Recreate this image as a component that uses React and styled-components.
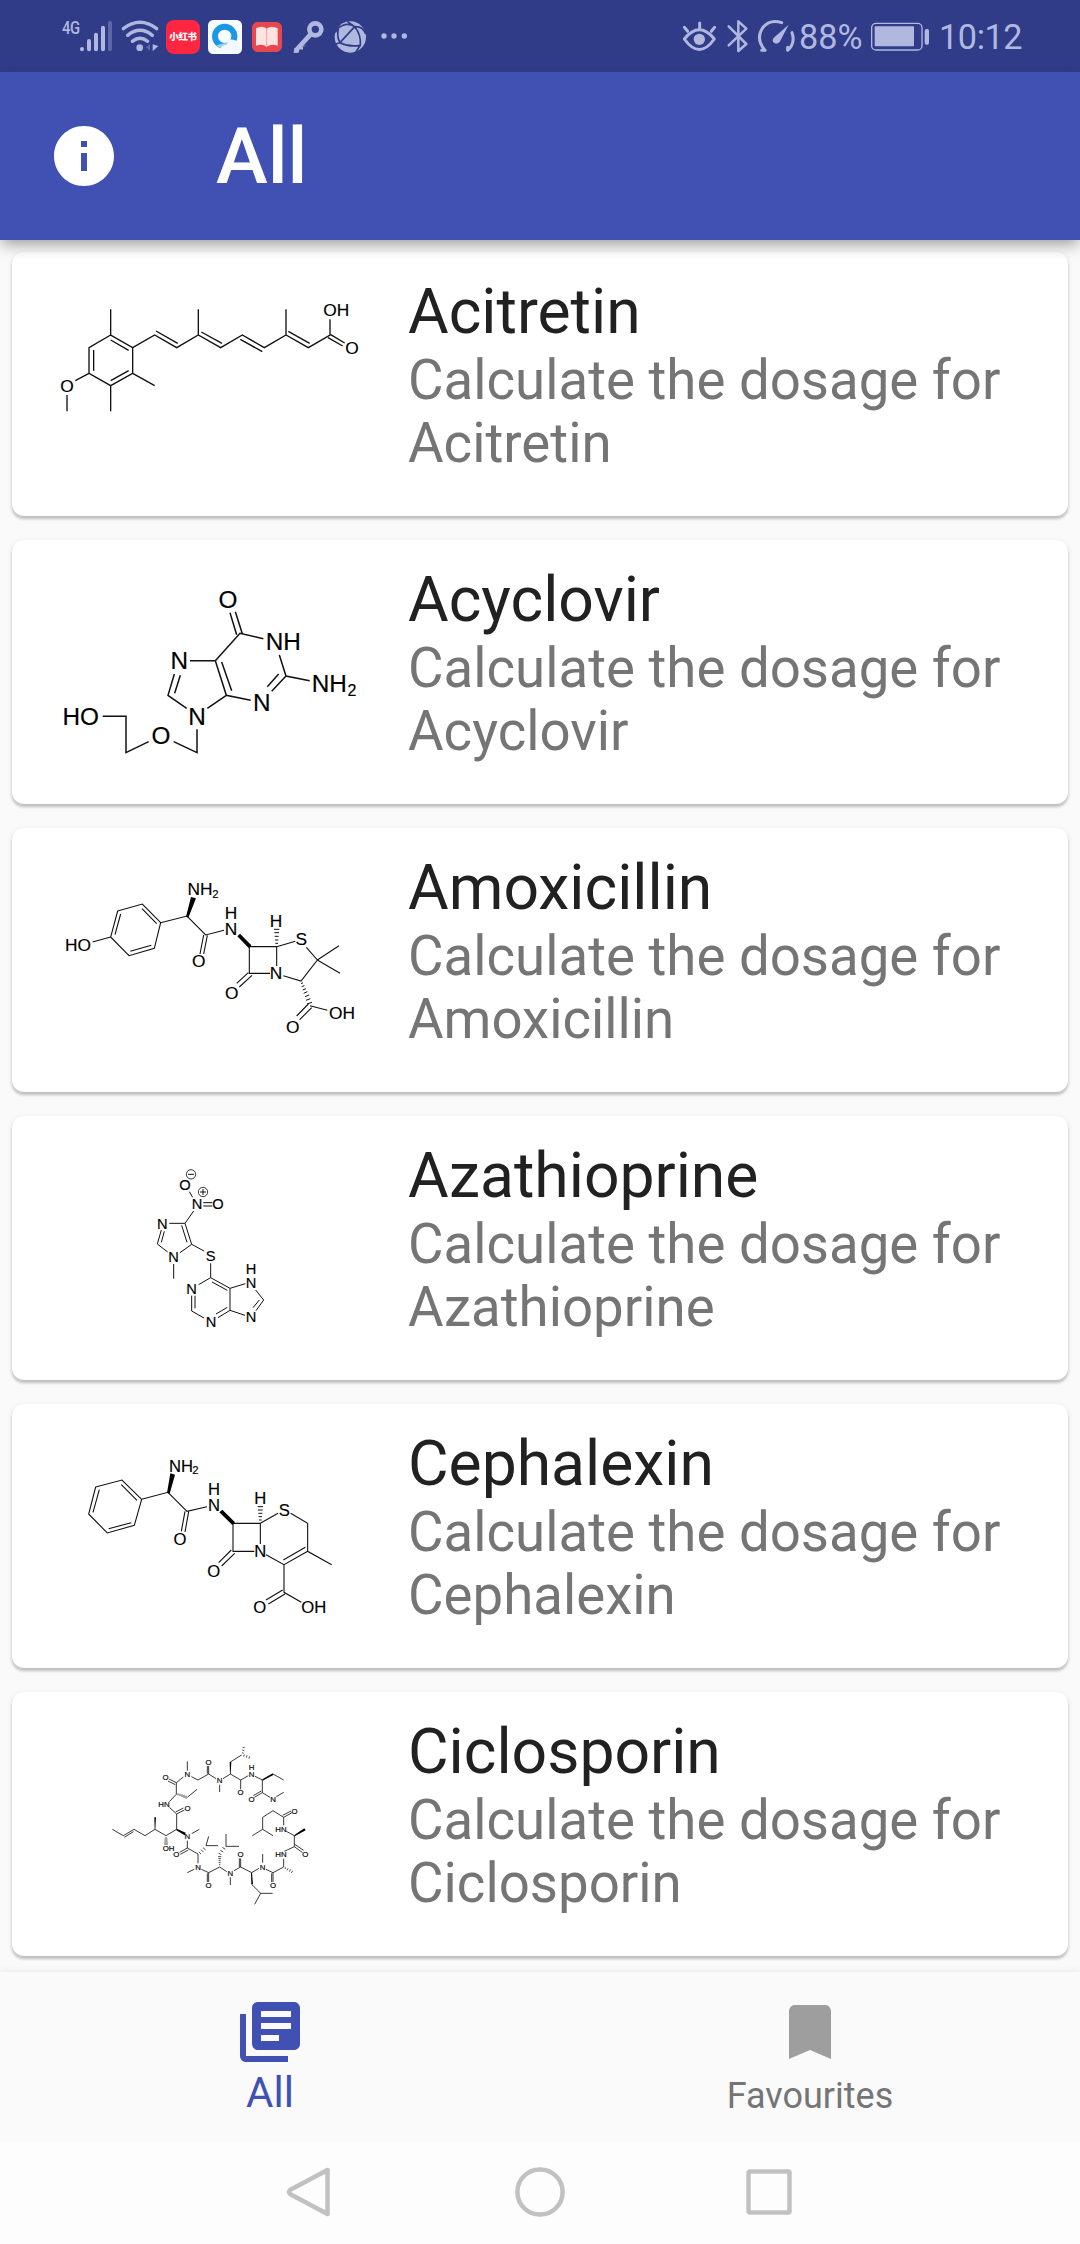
import React from "react";
import styled, { createGlobalStyle } from "styled-components";

const Global = createGlobalStyle`
  * { box-sizing: border-box; }
  body { margin: 0; background: #fafafa; font-family: Roboto, "Noto Sans CJK SC", sans-serif; }
`;

const Screen = styled.div`
  width: 1080px;
  height: 2244px;
  display: flex;
  flex-direction: column;
  overflow: hidden;
  background: #fafafa;
`;

/* ---------- status bar ---------- */

const tint = "#b1b8e0";

const StatusBar = styled.div`
  height: 72px;
  flex: none;
  display: flex;
  justify-content: space-between;
  padding: 19px 58px 0 62px;
  background: #303c88;
  color: ${tint};
`;

const StatusGroup = styled.div`
  display: flex;
  align-items: flex-start;
`;

const Glyph = styled.svg`
  display: block;
  flex: none;
  height: 35px;
  width: ${(p) => p.$w}px;
  margin-left: ${(p) => p.$ml || 0}px;
  fill: none;
  stroke-linecap: round;
  stroke-linejoin: round;
  overflow: visible;
`;

const NetworkType = styled.span`
  width: 18px;
  margin-top: -1px;
  font-size: 18.5px;
  font-weight: 500;
  line-height: 20px;
  letter-spacing: -0.5px;
  transform: scaleX(0.8);
  transform-origin: left;
`;

const RedBadge = styled.div`
  width: 34px;
  height: 34px;
  margin: 1px 0 0 7px;
  border-radius: 8px;
  background: #fe2641;
  color: #fff;
  display: flex;
  align-items: center;
  justify-content: center;
  font: 900 9.5px/1 "Noto Sans CJK SC", sans-serif;
  letter-spacing: -0.4px;
  white-space: nowrap;
`;

const StatusText = styled.span`
  font-size: 34.2px;
  line-height: 36px;
  letter-spacing: ${(p) => p.$ls || 0}px;
  margin-left: ${(p) => p.$ml}px;
  width: ${(p) => p.$w}px;
  white-space: nowrap;
`;

function Status() {
  return (
    <StatusBar>
      <StatusGroup>
        <NetworkType>4G</NetworkType>
        <Glyph $w={33} viewBox="120 57 99 105">
          <path d="M126 147V148M147 123V148M168 104V148M189 83V148" stroke={tint} strokeWidth="12" />
          <path d="M210 68V148" stroke="#5c66a8" strokeWidth="12" />
        </Glyph>
        <Glyph $w={38} $ml={8} viewBox="243 57 114 105">
          <path d="M250 86Q300 48 350 86M263 106Q300 76 337 106M277 124Q300 106 323 124" stroke={tint} strokeWidth="10" />
          <circle cx="299" cy="143" r="10" fill={tint} />
          <path d="M330 133V152L318 142Z" fill="#5c66a8" />
          <path d="M338 133V154L355 138Z" fill={tint} />
        </Glyph>
        <RedBadge>小红书</RedBadge>
        <Glyph $w={34} $ml={8} viewBox="504 57 102 105">
          <rect x="504" y="60" width="102" height="102" rx="16" fill="#f8fbfd" />
          <circle cx="554" cy="109" r="29" stroke="#1b97e8" strokeWidth="18" />
          <path d="M529 136Q550 156 585 140L590 120Z" fill="#8fd4f6" />
          <path d="M540 152Q542 134 560 134Q565 116 580 119Q592 121 591 132Q604 136 597 150Q570 154 540 152Z" fill="#f2f8fc" />
        </Glyph>
        <Glyph $w={30} $ml={10} viewBox="636 57 90 105">
          <rect x="636" y="66" width="90" height="90" rx="17" fill="#e84750" />
          <path d="M648 85Q668 75 680 86Q694 75 713 85V137Q694 131 680 140Q668 131 648 137Z" fill="#ffe3e1" />
          <path d="M680 87V138" stroke="#f0a0a0" strokeWidth="3" />
        </Glyph>
        <Glyph $w={32} $ml={11} viewBox="760 57 96 105">
          <circle cx="827" cy="88" r="18" stroke={tint} strokeWidth="14" />
          <path d="M812 104L770 150" stroke={tint} strokeWidth="14" />
          <path d="M764 145L762 159L777 158L779 147L790 149L790 137L802 137Z" fill={tint} />
        </Glyph>
        <Glyph $w={33} $ml={9} viewBox="884 57 99 105">
          <circle cx="933" cy="111" r="47" fill={tint} />
          <path
            d="M889 96Q895 82 908 77Q928 68 946 80M946 80L902 128M902 128Q892 112 897 86M902 128Q930 142 963 136M963 136Q966 104 946 80M946 80L926 66M963 136L950 155M902 128L890 132M946 80Q970 78 978 100"
            stroke="#303c88"
            strokeWidth="5"
          />
        </Glyph>
        <Glyph $w={28} $ml={13} viewBox="1021 57 84 105">
          <circle cx="1033" cy="108" r="8" fill={tint} />
          <circle cx="1063" cy="108" r="8" fill={tint} />
          <circle cx="1094" cy="108" r="8" fill={tint} />
        </Glyph>
      </StatusGroup>
      <StatusGroup>
        <Glyph $w={35} viewBox="69 57 105 105">
          <path d="M76 117Q121 62 166 117Q121 180 76 117Z" stroke={tint} strokeWidth="9" />
          <circle cx="121" cy="118" r="17" fill={tint} />
          <path d="M122 69V84M76 82L86 94M167 82L157 94" stroke={tint} strokeWidth="9" />
        </Glyph>
        <Glyph $w={22} $ml={9} viewBox="201 57 66 105">
          <path d="M209 79L262 132L238 153V64L262 86L209 136" stroke={tint} strokeWidth="7.5" />
        </Glyph>
        <Glyph $w={38} $ml={9} viewBox="294 57 114 105">
          <path d="M368 68Q334 56 312 82Q288 116 318 151M318 151L308 151M386 151Q410 130 399 98M386 151V142" stroke={tint} strokeWidth="9" />
          <path d="M389 74L362 126Q352 136 343 127Q338 119 346 112Z" fill={tint} />
        </Glyph>
        <StatusText $ml={4} $w={71}>88%</StatusText>
        <Glyph $w={60} viewBox="630 57 180 105">
          <rect x="635" y="70" width="151" height="80" rx="13" stroke={tint} strokeWidth="4" />
          <rect x="644" y="79" width="118" height="60" rx="3" fill={tint} />
          <rect x="794" y="87" width="13" height="47" rx="5" fill={tint} />
        </Glyph>
        <StatusText $ml={9} $w={83} $ls={-0.4}>10:12</StatusText>
      </StatusGroup>
    </StatusBar>
  );
}

/* ---------- app bar ---------- */

const AppBar = styled.header`
  position: relative;
  z-index: 1;
  height: 168px;
  flex: none;
  display: flex;
  align-items: center;
  padding-left: 48px;
  background: #4051b3;
  color: #fff;
  box-shadow: 0 6px 12px -3px rgba(0, 0, 0, 0.28), 0 8px 15px rgba(0, 0, 0, 0.12);
`;

const MaterialIcon = styled.svg`
  display: block;
  width: 72px;
  height: 72px;
  fill: currentColor;
`;

const BarTitle = styled.h1`
  margin: 2px 0 0 96px;
  font-size: 78px;
  font-weight: 500;
  line-height: 92px;
`;

/* ---------- cards ---------- */

const List = styled.main`
  flex: 1;
  min-height: 0;
  display: flex;
  flex-direction: column;
  gap: 24px;
  padding: 12px 12px 0;
`;

const Card = styled.article`
  height: 264px;
  flex: none;
  display: flex;
  border-radius: 12px;
  background: #fff;
  box-shadow: 0 3px 3px rgba(0, 0, 0, 0.2), 0 1px 5px rgba(0, 0, 0, 0.09);
`;

const Structure = styled.svg`
  display: block;
  flex: none;
  width: 396px;
  height: 264px;
  font-family: "Liberation Sans", Arial, sans-serif;
`;

const CardText = styled.div`
  flex: 1;
  padding: 23px 24px 0 0;
`;

const Name = styled.h2`
  margin: 0;
  font-size: 62.4px;
  line-height: 73px;
  font-weight: 400;
  color: #212121;
`;

const Description = styled.p`
  margin: 1px 0 0;
  font-size: 54.6px;
  line-height: 63px;
  color: #757575;
`;

/* Each drawing uses three units per pixel; labels are [x, y, text, size]. */
const drugs = [
  {
    name: "Acitretin",
    origin: [-84, -84],
    size: 52,
    stroke: 4,
    bonds:
      "M212 88V165L278 203V280L212 317L147 280V203L212 165M161 210V272M212 180L266 211M212 302L266 272M278 203L344 165L410 203L475 165L542 203L607 165L673 203L738 165L805 203L870 165V118M348 153L413 190M484 156L546 190M601 178L667 215M745 154L809 190M872 164L914 189M864 173L908 198M475 165V88M738 165V88M147 280L106 302M81 345V394M212 317V394M278 280L344 317",
    labels: [[81, 317, "O"], [889, 89, "OH"], [936, 203, "O"]],
  },
  {
    name: "Acyclovir",
    origin: [-84, -90],
    size: 73,
    stroke: 4.5,
    bonds:
      "M590 194L570 128M607 191L586 125M670 206L600 190L526 272H450M526 272L559 376L632 391M545 276L575 362M559 376L502 415M440 415L384 376L403 312M404 370L421 316M718 255L738 318L809 332M738 318L695 364M716 312L682 350M471 478V548L401 515M326 515L258 548V439H188",
    labels: [[564, 88, "O"], [730, 213, "NH"], [418, 271, "N"], [665, 398, "N"], [471, 440, "N"], [868, 340, "NH"], [936, 362, "2", 48], [122, 440, "HO"], [363, 495, "O"]],
  },
  {
    name: "Amoxicillin",
    origin: [-84, -96],
    size: 52,
    stroke: 3.3,
    bonds:
      "M233 153L307 132L362 188L343 265L267 287L212 231ZM242 162L225 224M306 146L350 191M334 256L271 274M212 231L158 246M362 188L441 168L497 225L552 211M491 225L480 282M502 226L491 282M628 260H710V318M628 260V340H690M625 338L590 370M636 346L598 381M710 260L766 244M799 262L832 300L783 363L730 347M832 300L897 257M832 300L900 340M810 437L862 451M805 432L770 468M815 443L779 479",
    wedges: "M438 170L453 111L468 115L445 173ZM626 264L592 229L600 221L634 256Z",
    hashes: "M702 208H718M703 218H717M704 229H716M705 240H715M706 250H714M783 371L789 368M785 380L793 377M788 390L798 386M791 400L802 395M795 410L807 405M798 421L811 416M801 432L816 427",
    labels: [[480, 88, "NH"], [526, 103, "2", 34], [114, 254, "HO"], [476, 303, "O"], [573, 208, "N"], [573, 160, "H"], [708, 182, "H"], [784, 238, "S"], [708, 340, "N"], [575, 398, "O"], [906, 458, "OH"], [758, 500, "O"]],
  },
  {
    name: "Azathioprine",
    origin: [-354, -102],
    size: 44,
    stroke: 3,
    bonds:
      "M178 125L188 142M220 158H247M220 168H247M191 183L165 220H118M165 220L185 283L150 308M155 226L171 277M94 240L82 282L113 306M103 244L94 277M131 342V386M185 283L222 303M242 340V383L206 404M185 437V483L222 504M195 437V475M264 503L300 481M258 492L292 472M246 396L292 421M242 383L300 415V481M300 415L346 401M377 420L401 450L378 482M388 450L369 473M345 496L300 481M174 73H192M210 126H228M219 117V135",
    circles: [[183, 73, 14], [219, 126, 14]],
    labels: [[165, 106, "O"], [201, 163, "N"], [264, 163, "O"], [97, 221, "N"], [131, 322, "N"], [242, 318, "S"], [185, 417, "N"], [243, 515, "N"], [363, 398, "N"], [363, 357, "H"], [363, 502, "N"]],
  },
  {
    name: "Cephalexin",
    origin: [-174, -108],
    size: 50,
    stroke: 3.3,
    bonds:
      "M77 141L156 120L215 178L193 256L112 279L56 222ZM88 149L69 217M154 134L201 181M184 248L116 266M215 178L294 157L351 214L411 200M345 214L334 274M356 215L345 276M489 250H571V312M489 250V334H553M484 330L446 368M494 340L455 378M571 250L624 220M662 220L713 250V334L785 374M713 334L642 374L588 344M706 322L640 360M642 374V457L694 487M638 450L588 480M645 462L595 492",
    wedges: "M291 159L301 100L315 104L299 161ZM487 255L448 217L457 209L495 247Z",
    hashes: "M563 200H579M564 210H578M565 220H577M566 230H576M567 240H575",
    labels: [[333, 77, "NH"], [376, 91, "2", 34], [330, 297, "O"], [432, 196, "N"], [432, 148, "H"], [571, 175, "H"], [643, 210, "S"], [571, 334, "N"], [431, 393, "O"], [731, 500, "OH"], [569, 500, "O"]],
  },
  {
    name: "Ciclosporin",
    origin: [-264, -114],
    size: 23.5,
    stroke: 2.5,
    bonds:
      "M262 94V122M250 141L229 158V193L208 215M229 158L207 147M226 164L204 153M208 232L230 252V298L198 317L165 298L135 317L102 298L70 317L37 298M100 305L73 322M230 252L253 240M227 246L250 234M262 202L291 178M275 311L298 298M262 332V354L239 367M265 360L241 373M262 354L294 372V400M318 347H354M318 347L326 319M282 418L262 428M304 418L326 428V456M322 430V456M326 428L359 411L380 425M378 349H417M378 349V312M391 442V465M402 422L422 411V385M418 411V385M422 411L455 428L477 415M455 463L482 490H518M482 490L464 523M488 372V398M498 418L519 428V456M515 430V456M519 428L551 411V386M553 364L583 350L608 368M584 343L611 361M583 350V317L559 304M551 286V262L576 248M548 256L573 243M551 262L519 242L488 262V298L519 317M488 298L457 317M274 140L294 150L326 132V108M322 131V108M326 132L348 146M359 164V186M369 146L391 132L422 150L445 137M391 96L425 75M422 150V178M465 139L487 150V188L463 202M519 132L551 150M484 183L460 197M487 188L510 202M529 200L551 187",
    wedges: "M230 296L257 308L254 316L229 301ZM163 262H168L166 298H164ZM389 96H394L392 132H390ZM487 148L518 130L520 135L488 152ZM453 428H456L459 463H454ZM583 315L613 295L617 301L584 319Z",
    hashes: "M194 324H202M193 330H203M193 336H203M192 342H204M234 190V196M240 191V198M246 193V201M252 195V204M258 197V206M297 366L303 372M303 359L310 366M309 353L317 360M357 404H361M356 398H362M356 392H362M355 386H363M354 380H364M364 374L356 370M370 366L361 361M376 358L367 352M426 68L431 70M427 60L433 62M428 52L434 53M433 74L431 80M441 76L439 83M449 79L447 86M557 412L555 417M564 415L561 421M571 418L568 425M578 422L574 429",
    labels: [[197, 143, "O"], [262, 133, "N"], [326, 96, "O"], [359, 152, "N"], [422, 188, "O"], [455, 132, "N"], [455, 112, "H"], [455, 208, "O"], [519, 208, "N"], [192, 224, "HN"], [263, 236, "O"], [206, 356, "OH"], [262, 320, "N"], [229, 374, "O"], [294, 411, "N"], [326, 467, "O"], [391, 430, "N"], [422, 374, "O"], [488, 411, "N"], [519, 467, "O"], [543, 374, "HN"], [616, 374, "O"], [543, 298, "HN"], [584, 243, "O"]],
  },
];

function DrugCard({ drug }) {
  const { name, origin, size, stroke, bonds, wedges, hashes, circles = [], labels } = drug;
  return (
    <Card>
      <Structure viewBox={`${origin[0]} ${origin[1]} 1188 792`}>
        <path d={bonds} fill="none" stroke="#111" strokeWidth={stroke} />
        {hashes && <path d={hashes} fill="none" stroke="#111" strokeWidth={stroke * 0.9} />}
        {wedges && <path d={wedges} fill="#000" />}
        {circles.map(([x, y, r]) => (
          <circle key={x} cx={x} cy={y} r={r} fill="none" stroke="#111" strokeWidth="2.5" />
        ))}
        {labels.map(([x, y, text, s = size]) => (
          <text key={`${x}-${y}`} x={x} y={y + s * 0.35} fontSize={s} textAnchor="middle" fill="#000" stroke="#000" strokeWidth="0.5">
            {text}
          </text>
        ))}
      </Structure>
      <CardText>
        <Name>{name}</Name>
        <Description>Calculate the dosage for {name}</Description>
      </CardText>
    </Card>
  );
}

/* ---------- bottom navigation ---------- */

const Tabs = styled.nav`
  position: relative;
  height: 168px;
  flex: none;
  display: flex;
  background: #fafafa;
  box-shadow: 0 -2px 5px rgba(0, 0, 0, 0.05);
`;

const Tab = styled.div`
  flex: 1;
  display: flex;
  flex-direction: column;
  align-items: center;
  padding-top: 24px;
  color: ${(p) => (p.$active ? "#4051b3" : "#9e9e9e")};
`;

const TabLabel = styled.span`
  margin-top: ${(p) => (p.$active ? 0 : 7)}px;
  font-size: ${(p) => (p.$active ? 42 : 36)}px;
  line-height: ${(p) => (p.$active ? 49 : 42)}px;
  color: ${(p) => (p.$active ? "#4051b3" : "#757575")};
`;

const SystemNav = styled.footer`
  height: 104px;
  flex: none;
  display: flex;
  align-items: center;
  padding: 0 286px 0 285px;
  justify-content: space-between;
  background: #fdfdfd;
`;

const NavGlyph = styled.svg`
  display: block;
  width: ${(p) => p.$w}px;
  height: 52px;
  fill: none;
  stroke: #c1c1c1;
  stroke-width: 4.5;
  stroke-linejoin: round;
`;

export default function App() {
  return (
    <Screen>
      <Global />
      <Status />
      <AppBar>
        <MaterialIcon viewBox="0 0 24 24">
          <path d="M12 2C6.48 2 2 6.48 2 12s4.48 10 10 10 10-4.48 10-10S17.52 2 12 2zm1 15h-2v-6h2v6zm0-8h-2V7h2v2z" />
        </MaterialIcon>
        <BarTitle>All</BarTitle>
      </AppBar>
      <List>
        {drugs.map((d) => (
          <DrugCard key={d.name} drug={d} />
        ))}
      </List>
      <Tabs>
        <Tab $active>
          <MaterialIcon viewBox="0 0 24 24">
            <path d="M4 6H2v14c0 1.1.9 2 2 2h14v-2H4V6zm16-4H8c-1.1 0-2 .9-2 2v12c0 1.1.9 2 2 2h12c1.1 0 2-.9 2-2V4c0-1.1-.9-2-2-2zm-1 9H9V9h10v2zm-4 4H9v-2h6v2zm4-8H9V5h10v2z" />
          </MaterialIcon>
          <TabLabel $active>All</TabLabel>
        </Tab>
        <Tab>
          <MaterialIcon viewBox="0 0 24 24">
            <path d="M17 3H7c-1.1 0-1.99.9-1.99 2L5 21l7-3 7 3V5c0-1.1-.9-2-2-2z" />
          </MaterialIcon>
          <TabLabel>Favourites</TabLabel>
        </Tab>
      </Tabs>
      <SystemNav>
        <NavGlyph $w={46} viewBox="0 0 46 52">
          <path d="M42.5 4V48L5 28Q3 26 5 24Z" />
        </NavGlyph>
        <NavGlyph $w={52} viewBox="-1 0 52 52">
          <circle cx="26" cy="26" r="22.6" />
        </NavGlyph>
        <NavGlyph $w={48} viewBox="0 0 48 52">
          <rect x="2.5" y="5.5" width="41" height="41" rx="1.5" />
        </NavGlyph>
      </SystemNav>
    </Screen>
  );
}
